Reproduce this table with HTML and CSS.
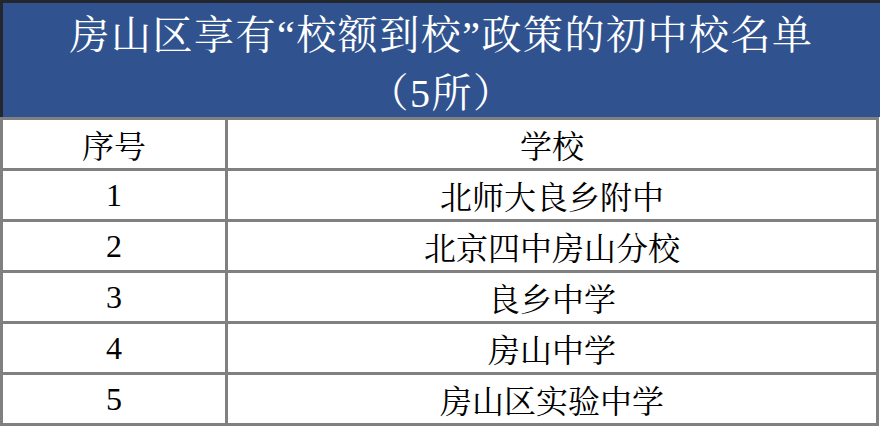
FILE: index.html
```html
<!DOCTYPE html>
<html lang="zh-CN">
<head>
<meta charset="utf-8">
<title>房山区享有“校额到校”政策的初中校名单</title>
<link rel="stylesheet" href="styles.css">
</head>
<body>
<div class="sheet">
  <div class="title">房山区享有“校额到校”政策的初中校名单<br>（5所）</div>
  <div class="grid">
    <div class="cell">序号</div><div class="cell">学校</div>
    <div class="cell num">1</div><div class="cell">北师大良乡附中</div>
    <div class="cell num">2</div><div class="cell">北京四中房山分校</div>
    <div class="cell num">3</div><div class="cell">良乡中学</div>
    <div class="cell num">4</div><div class="cell">房山中学</div>
    <div class="cell num">5</div><div class="cell">房山区实验中学</div>
  </div>
</div>
</body>
</html>
```
FILE: styles.css
```css
html, body {
  margin: 0;
  padding: 0;
  background: #ffffff;
}
body {
  font-family: "Liberation Serif", "Noto Serif CJK SC", "Noto Sans CJK SC", serif;
  width: 880px;
  height: 427px;
  overflow: hidden;
}
.sheet {
  width: 880px;
}
.title {
  box-sizing: border-box;
  height: 117px;
  padding-top: 4px;
  background: #30538f;
  border-top: 3px solid #23262c;
  border-left: 3px solid #23262c;
  color: #ffffff;
  font-size: 40px;
  line-height: 58px;
  letter-spacing: 1.5px;
  text-align: center;
  overflow: hidden;
}
.grid {
  width: 873px;
  display: grid;
  grid-template-columns: 222px 648px;
  grid-auto-rows: 48px;
  gap: 3px;
  padding: 3px;
  background: #808080;
}
.cell {
  background: #ffffff;
  color: #000000;
  font-size: 32px;
  display: flex;
  align-items: center;
  justify-content: center;
}
.num {
  font-size: 32px;
}
```
